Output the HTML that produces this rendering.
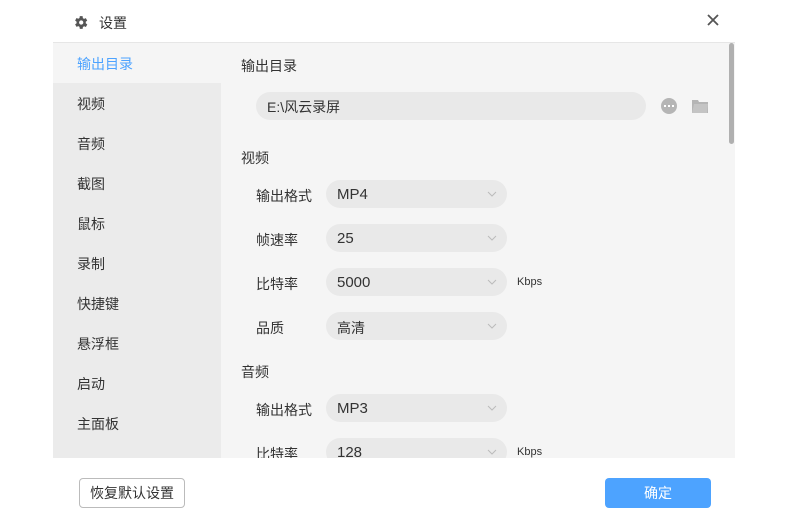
<!DOCTYPE html><html><head><meta charset="utf-8"><style>
*{margin:0;padding:0;box-sizing:border-box}
body{width:789px;height:526px;background:#fff;font-family:"Liberation Sans","Noto Sans CJK SC",sans-serif;position:relative;overflow:hidden;color:#333;font-size:14px}
.dlg{position:absolute;left:53px;top:0;width:682px;height:526px;background:#fff;border-radius:12px;overflow:hidden}
.hd{position:absolute;left:0;top:0;width:682px;height:43px;border-bottom:1px solid #e6e6e6;background:#fff}
.t{position:absolute;left:46px;top:13px;font-size:14px;color:#333}
.body{position:absolute;left:0;top:43px;width:682px;height:415px;background:#f5f5f5;overflow:hidden}
.side{position:absolute;left:0;top:40px;width:168px;height:375px;background:#ebebeb}
.it{position:absolute;left:24px;font-size:14px;color:#333}
.ft{position:absolute;left:0;top:458px;width:682px;height:68px;background:#fff}
.lb{position:absolute;font-size:14px;color:#333}
.sel{position:absolute;left:273px;width:181px;height:28px;background:#e9e9e9;border-radius:14px;font-size:15px;padding:6px 0 0 11px;color:#333}
.sel svg{position:absolute;right:10px;top:11px}
.k{position:absolute;left:464px;font-size:11px;color:#333}
</style></head><body>
<div class="dlg">
<div class="hd">
<svg style="position:absolute;left:19px;top:14px" width="17" height="17" viewBox="0 0 24 24"><path fill="#555" d="M19.4 13a7.5 7.5 0 0 0 0-2l2.1-1.6-2-3.5-2.5 1a7.6 7.6 0 0 0-1.7-1L15 3h-4l-.4 2.7a7.6 7.6 0 0 0-1.7 1l-2.5-1-2 3.5L6.5 11a7.5 7.5 0 0 0 0 2l-2.1 1.6 2 3.5 2.5-1a7.6 7.6 0 0 0 1.7 1L11 21h4l.4-2.7a7.6 7.6 0 0 0 1.7-1l2.5 1 2-3.5zM13 15a3 3 0 1 1 0-6 3 3 0 0 1 0 6z"/></svg>
<div class="t">设置</div>
<svg style="position:absolute;left:654px;top:14px" width="12" height="12" viewBox="0 0 12 12"><path d="M1 1L11 11M11 1L1 11" stroke="#555" stroke-width="1.8"/></svg>
</div>
<div class="body">
<div class="side"></div>
<div class="it" style="top:11px;color:#4da3ff">输出目录</div>
<div class="it" style="top:51px">视频</div>
<div class="it" style="top:91px">音频</div>
<div class="it" style="top:131px">截图</div>
<div class="it" style="top:171px">鼠标</div>
<div class="it" style="top:211px">录制</div>
<div class="it" style="top:251px">快捷键</div>
<div class="it" style="top:291px">悬浮框</div>
<div class="it" style="top:331px">启动</div>
<div class="it" style="top:371px">主面板</div>
<div class="lb" style="left:188px;top:13px">输出目录</div>
<div style="position:absolute;left:203px;top:49px;width:390px;height:28px;background:#e9e9e9;border-radius:14px;padding:5px 0 0 11px;font-size:14px">E:\风云录屏</div>
<div style="position:absolute;left:608px;top:55px;width:16px;height:16px;border-radius:8px;background:#b5b5b5"><span style="position:absolute;left:3px;top:7px;width:2px;height:2px;background:#fff;box-shadow:4px 0 #fff,8px 0 #fff"></span></div>
<svg style="position:absolute;left:639px;top:56px" width="16" height="14" viewBox="0 0 16 14"><path d="M0 1h6l1 2h9v11H0z" fill="#b5b5b5"/><path d="M2 5h14l-1 9H0z" fill="#c4c4c4"/></svg>
<div class="lb" style="left:188px;top:105px">视频</div>
<div class="lb" style="left:203px;top:143px">输出格式</div><div class="sel" style="top:137px">MP4<svg width="10" height="6"><path d="M1 1l4 4 4-4" stroke="#bbb" fill="none"/></svg></div>
<div class="lb" style="left:203px;top:187px">帧速率</div><div class="sel" style="top:181px">25<svg width="10" height="6"><path d="M1 1l4 4 4-4" stroke="#bbb" fill="none"/></svg></div>
<div class="lb" style="left:203px;top:231px">比特率</div><div class="sel" style="top:225px">5000<svg width="10" height="6"><path d="M1 1l4 4 4-4" stroke="#bbb" fill="none"/></svg></div><div class="k" style="top:233px">Kbps</div>
<div class="lb" style="left:203px;top:275px">品质</div><div class="sel" style="top:269px;font-size:14px">高清<svg width="10" height="6"><path d="M1 1l4 4 4-4" stroke="#bbb" fill="none"/></svg></div>
<div class="lb" style="left:188px;top:319px">音频</div>
<div class="lb" style="left:203px;top:357px">输出格式</div><div class="sel" style="top:351px">MP3<svg width="10" height="6"><path d="M1 1l4 4 4-4" stroke="#bbb" fill="none"/></svg></div>
<div class="lb" style="left:203px;top:401px">比特率</div><div class="sel" style="top:395px">128<svg width="10" height="6"><path d="M1 1l4 4 4-4" stroke="#bbb" fill="none"/></svg></div><div class="k" style="top:403px">Kbps</div>
<div style="position:absolute;left:676px;top:0;width:5px;height:101px;background:#b0b0b0;border-radius:3px"></div>
</div>
<div class="ft">
<div style="position:absolute;left:26px;top:20px;width:106px;height:30px;border:1px solid #bbb;border-radius:4px;text-align:center;line-height:28px;font-size:14px;color:#333">恢复默认设置</div>
<div style="position:absolute;left:552px;top:20px;width:106px;height:30px;background:#4da3ff;border-radius:4px;text-align:center;line-height:30px;font-size:14px;color:#fff">确定</div>
</div>
</div>
</body></html>
